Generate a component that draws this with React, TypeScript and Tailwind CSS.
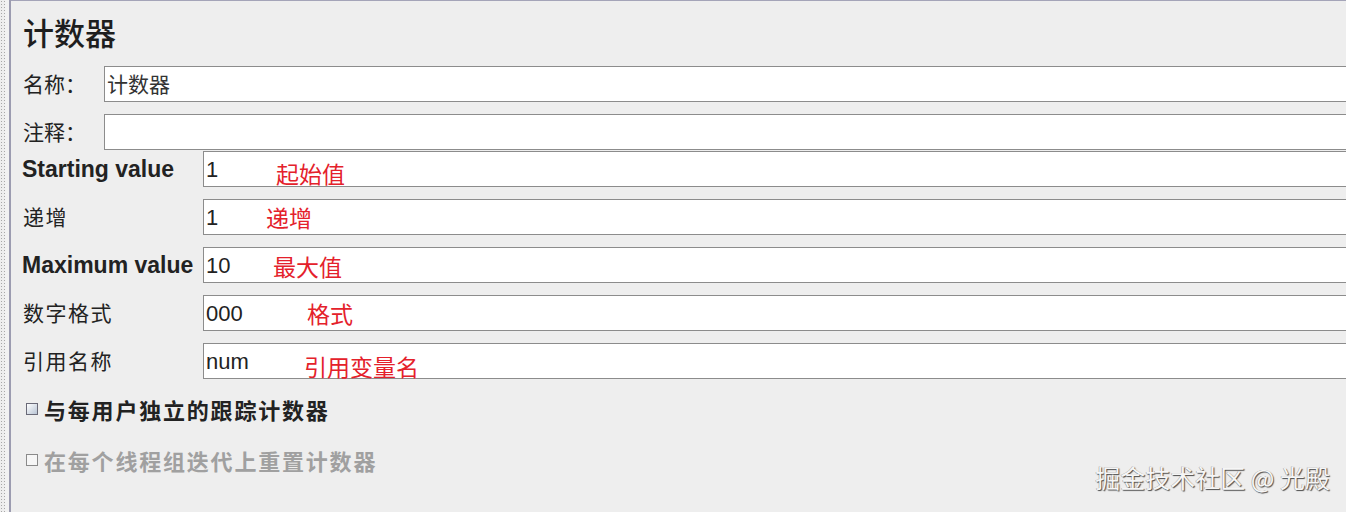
import React from "react";

const cjk = "font-['Noto_Sans_CJK_SC',sans-serif]";
const latin = "font-['Liberation_Sans','Noto_Sans_CJK_SC',sans-serif]";

type Field = {
  label: string;
  bold?: boolean;
  value: string;
  note: string;
  noteLeft: string;
  noteShift?: string;
};

const fields: Field[] = [
  { label: "Starting value", bold: true, value: "1", note: "起始值", noteLeft: "left-[72px]", noteShift: "top-[8px]" },
  { label: "递增", value: "1", note: "递增", noteLeft: "left-[62px]", noteShift: "top-[4px]" },
  { label: "Maximum value", bold: true, value: "10", note: "最大值", noteLeft: "left-[69px]", noteShift: "top-[5px]" },
  { label: "数字格式", value: "000", note: "格式", noteLeft: "left-[103px]", noteShift: "top-[4px]" },
  { label: "引用名称", value: "num", note: "引用变量名", noteLeft: "left-[100px]", noteShift: "top-[9px]" },
];

function TextBox({ children, className = "" }: { children?: React.ReactNode; className?: string }) {
  return (
    <div className={`relative flex-1 h-[36px] bg-white border border-r-0 border-[#8c8c8c] flex items-center pl-[2px] ${className}`}>
      {children}
    </div>
  );
}

function Checkbox({ disabled }: { disabled?: boolean }) {
  return (
    <span
      className={`inline-block w-[12px] h-[12px] border ${
        disabled
          ? "border-[#8a8a8a] bg-[#f6f6f6]"
          : "border-[#6a6a78] bg-gradient-to-br from-[#ffffff] to-[#b8c4d4]"
      }`}
    />
  );
}

export default function App() {
  return (
    <div className="relative w-[1346px] h-[512px] overflow-hidden bg-[#eeeeee] flex">
      {/* dotted splitter */}
      <div className="w-[5px] h-full bg-[radial-gradient(circle,#a8a8a8_0.7px,transparent_1px)] bg-[length:3px_3px]" />
      <div className="w-[4px] h-full bg-[#f2f2f2]" />
      <div className="w-[2px] h-full bg-[#9c9cb0]" />

      <div className="flex-1 flex flex-col border-t border-[#a4a4b8]">
        {/* title */}
        <div className={`pl-[12px] pt-[13px] h-[65px] text-[31px] leading-[36px] text-[#1e1e1e] font-medium ${cjk}`}>计数器</div>

        {/* name + comment */}
        <div className="flex flex-col gap-[12px]">
          <div className="flex items-center">
            <div className={`w-[93px] pl-[12px] text-[21px] text-[#222] ${cjk}`}>名称：</div>
            <TextBox>
              <span className={`text-[21px] text-[#333] ${cjk}`}>计数器</span>
            </TextBox>
          </div>
          <div className="flex items-center">
            <div className={`w-[93px] pl-[12px] text-[21px] text-[#222] ${cjk}`}>注释：</div>
            <TextBox />
          </div>
        </div>

        {/* counter settings */}
        <div className="mt-[1px] flex flex-col gap-[12px]">
          {fields.map((f) => (
            <div key={f.label} className="flex items-center">
              <div
                className={`w-[192px] pl-[11px] whitespace-nowrap text-[#222] ${
                  f.bold ? `text-[23px] font-bold ${latin}` : `pl-[12px] text-[21px] tracking-[1.5px] ${cjk}`
                }`}
              >
                {f.label}
              </div>
              <TextBox>
                <span className={`text-[22px] text-[#222] ${latin}`}>{f.value}</span>
                <span
                  className={`absolute ${f.noteLeft} ${f.noteShift} text-[23px] leading-[26px] text-[#e4212b] ${cjk}`}
                >
                  {f.note}
                </span>
              </TextBox>
            </div>
          ))}
        </div>

        {/* options */}
        <div className={`mt-[5px] pl-[15px] flex flex-col ${cjk}`}>
          <label className="h-[50px] flex items-center gap-[6px]">
            <Checkbox />
            <span className="text-[22px] tracking-[1.8px] font-bold text-[#222]">与每用户独立的跟踪计数器</span>
          </label>
          <label className="h-[52px] flex items-center gap-[6px]">
            <Checkbox disabled />
            <span className="text-[22px] tracking-[1.8px] font-bold text-[#a0a0a0]">在每个线程组迭代上重置计数器</span>
          </label>
        </div>
      </div>

      {/* watermark */}
      <div
        className={`absolute right-[16px] top-[461px] text-[25px] leading-[32px] text-[#f6f6f6] [text-shadow:1px_1px_1px_#4a4a4a,-0.5px_-0.5px_0_#9a9a9a] ${cjk}`}
      >
        掘金技术社区 @ 光殿
      </div>
    </div>
  );
}
